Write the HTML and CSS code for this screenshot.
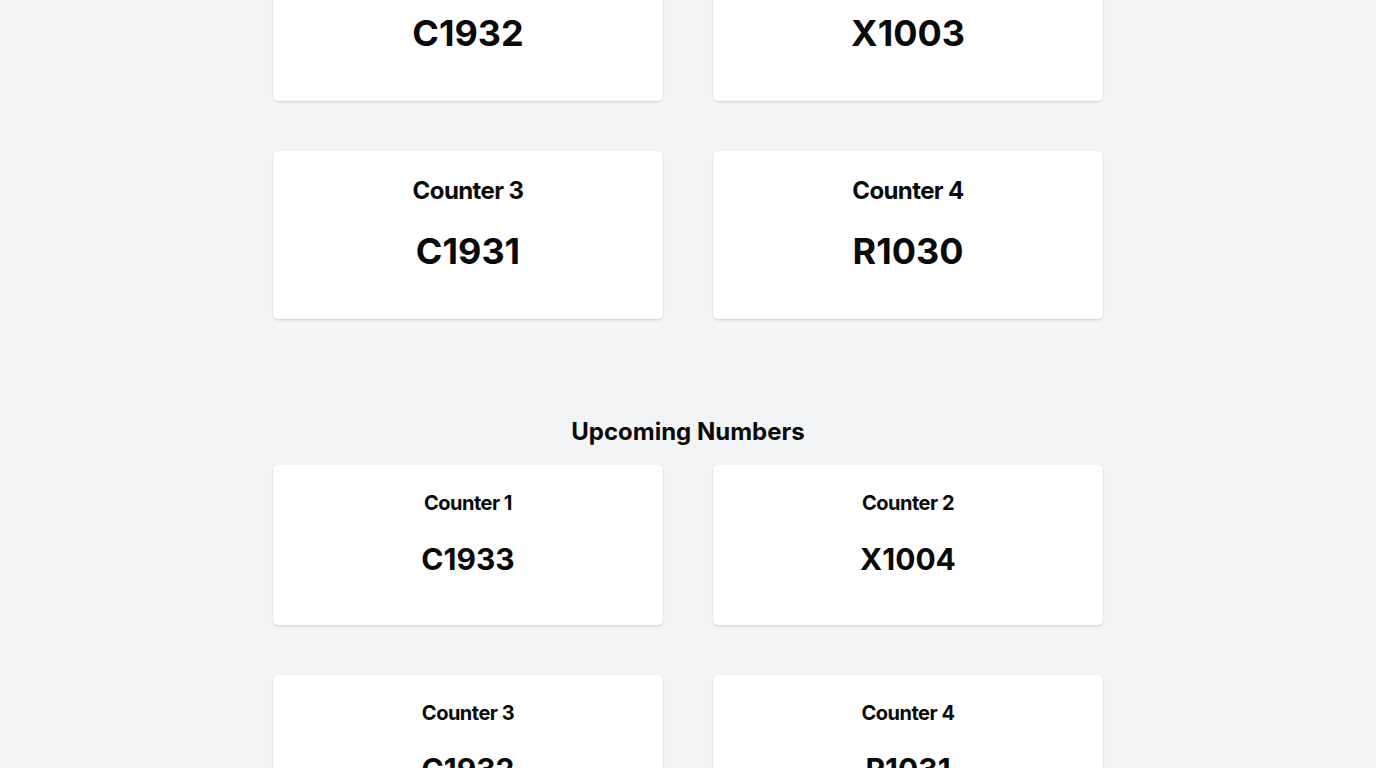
FILE: index.html
```html
<!DOCTYPE html>
<html lang="en">
<head>
<meta charset="utf-8">
<title>Queue Display</title>
<link rel="stylesheet" href="styles.css">
</head>
<body>
<main class="page">
  <section class="section current">
    <div class="grid">
      <div class="card"><h3 class="title">Counter 1</h3><p class="number">C1932</p></div>
      <div class="card"><h3 class="title">Counter 2</h3><p class="number">X1003</p></div>
      <div class="card"><h3 class="title">Counter 3</h3><p class="number">C1931</p></div>
      <div class="card"><h3 class="title">Counter 4</h3><p class="number">R1030</p></div>
    </div>
  </section>
  <section class="section upcoming">
    <h2 class="heading">Upcoming Numbers</h2>
    <div class="grid">
      <div class="card"><h3 class="title">Counter 1</h3><p class="number">C1933</p></div>
      <div class="card"><h3 class="title">Counter 2</h3><p class="number">X1004</p></div>
      <div class="card"><h3 class="title">Counter 3</h3><p class="number">C1932</p></div>
      <div class="card"><h3 class="title">Counter 4</h3><p class="number">R1031</p></div>
    </div>
  </section>
</main>
</body>
</html>
```
FILE: styles.css
```css
html, body {
  margin: 0;
  padding: 0;
  background: #f3f4f6;
  color: #0a0a0a;
  font-family: Inter, "Noto Sans", "Liberation Sans", sans-serif;
  overflow: hidden;
}
.page {
  width: 830px;
  margin: -67px auto 0;
}
.grid {
  display: grid;
  grid-template-columns: 390px 390px;
  column-gap: 50px;
  row-gap: 50px;
}
.card {
  background: #ffffff;
  border-radius: 5px;
  box-shadow: 0 1px 3px rgba(0,0,0,0.10), 0 1px 2px rgba(0,0,0,0.06);
  padding: 24px 16px;
  text-align: center;
}
.title {
  margin: 0 0 24px;
  font-weight: 700;
  letter-spacing: -0.025em;
}
.number {
  margin: 0 0 24px;
  font-weight: 700;
}
.current .title {
  font-size: 24px;
  line-height: 32px;
}
.current .number {
  font-size: 36px;
  line-height: 40px;
}
.upcoming {
  margin-top: 97px;
}
.heading {
  margin: 0 0 17px;
  font-size: 24px;
  line-height: 32px;
  font-weight: 700;
  text-align: center;
}
.upcoming .title {
  font-size: 20px;
  line-height: 28px;
}
.upcoming .number {
  font-size: 30px;
  line-height: 36px;
}
```
